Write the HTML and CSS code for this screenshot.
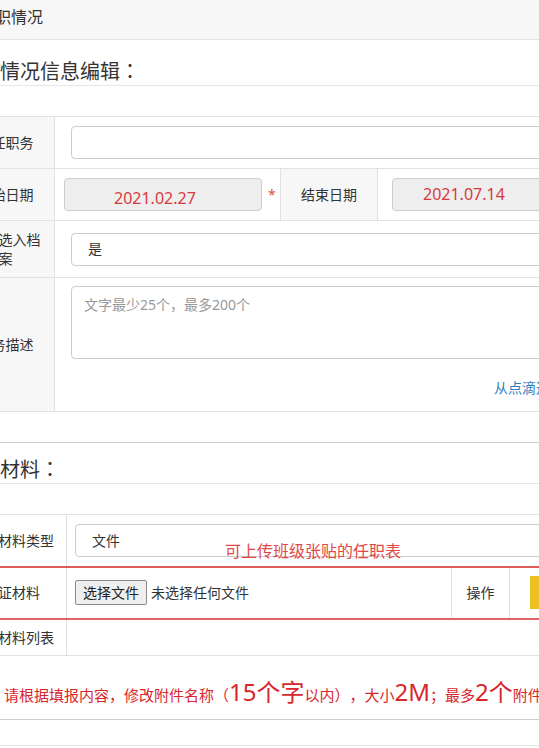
FILE: index.html
```html
<!DOCTYPE html>
<html lang="zh-CN">
<head>
<meta charset="utf-8">
<title>任职情况</title>
<link rel="stylesheet" href="styles.css">
</head>
<body>
<div class="page">
  <div class="topbar">任职情况</div>

  <div class="section">
    <div class="sec-title first">任职情况信息编辑<span class="colon" lang="zh-TW">：</span></div>
    <table class="grid grid-a">
      <colgroup><col class="a1"><col class="a2"><col class="a3"><col></colgroup>
      <tr class="ra1">
        <th>担任职务</th>
        <td colspan="3" class="in"><div class="field"></div></td>
      </tr>
      <tr class="ra2">
        <th>开始日期</th>
        <td class="date-cell"><div class="date-wrap"><div class="field date start">2021.02.27</div><span class="req">*</span></div></td>
        <th>结束日期</th>
        <td class="end-cell"><div class="field date end">2021.07.14</div></td>
      </tr>
      <tr class="ra3">
        <th>是否选入档案</th>
        <td colspan="3" class="in"><div class="field sel">是</div></td>
      </tr>
      <tr class="ra4">
        <th>任务描述</th>
        <td colspan="3" class="in top"><div class="area">文字最少25个，最多200个</div><div class="link">从点滴选择</div></td>
      </tr>
    </table>
  </div>

  <div class="section second">
    <div class="sec-title">证明材料<span class="colon" lang="zh-TW">：</span></div>
    <div class="table-wrap">
      <table class="grid grid-b">
        <colgroup><col class="b1"><col class="b2"><col class="b3"><col></colgroup>
        <tr class="rb1">
          <th>证明材料类型</th>
          <td colspan="3" class="in-b"><div class="field sel2">文件</div></td>
        </tr>
        <tr class="rb2 hl">
          <th>验证材料</th>
          <td class="in-b"><div class="file-row"><span class="filebtn">选择文件</span><span class="nofile">未选择任何文件</span></div></td>
          <th>操作</th>
          <td class="up-cell"><span class="upload">上传</span></td>
        </tr>
        <tr class="rb3">
          <th>证明材料列表</th>
          <td colspan="3"></td>
        </tr>
      </table>
      <div class="annot">可上传班级张贴的任职表</div>
    </div>
    <div class="note"><p><span class="n">注：请根据填报内容，修改附件名称（</span><span class="big">15个字</span><span class="n">以内），大小</span><span class="big">2M</span><span class="n">；最多</span><span class="big">2个</span><span class="n">附件</span></p></div>
    <div class="tail"></div>
  </div>
</div>
</body>
</html>
```

FILE: styles.css
```css
html, body {
  margin: 0;
  padding: 0;
  overflow: hidden;
  background: #fff;
}
body {
  font-family: "Noto Sans", "Noto Sans CJK SC", sans-serif;
  color: #333;
  font-size: 14px;
  line-height: 18px;
  text-spacing-trim: space-all;
}
.page {
  width: 760px;
  margin-left: -40px;
}
.topbar {
  height: 39px;
  line-height: 34px;
  font-size: 16px;
  padding-left: 19px;
  background: #f7f7f7;
  border-bottom: 1px solid #e3e3e3;
}
.sec-title {
  font-size: 20px;
  line-height: 26px;
  height: 26px;
  padding-top: 14px;
  border-bottom: 1px solid #e6e6e6;
}
.sec-title.first {
  padding-top: 19px;
}
.colon {
  font-family: "Noto Sans CJK TC", "Noto Sans CJK SC", sans-serif;
  line-height: 1;
}
.section.second {
  margin-top: 30px;
  border-top: 1px solid #cfcfcf;
}
.grid {
  border-collapse: collapse;
  table-layout: fixed;
  width: 700px;
  margin-top: 30px;
}
.grid th, .grid td {
  border: 1px solid #e1e1e1;
  padding: 0;
  vertical-align: middle;
  font-weight: normal;
  font-size: 14px;
  line-height: 19px;
}
.grid th {
  text-align: center;
  padding: 0 12px 0 8px;
}
.grid-a th {
  background: #f7f7f7;
}
.grid-a th:nth-child(3) {
  padding: 0;
}
.a1 { width: 94px; }
.a2 { width: 226px; }
.a3 { width: 97px; }
.ra1 { height: 52px; }
.ra2 { height: 52px; }
.ra3 { height: 57px; }
.ra4 { height: 134px; }
.in { padding-left: 16px !important; }
.top { vertical-align: top !important; padding-top: 8px !important; }
.field {
  box-sizing: border-box;
  height: 33px;
  border: 1px solid #cccccc;
  border-radius: 4px;
  background: #fff;
  line-height: 31px;
  font-size: 14px;
}
.sel { padding-left: 16px; line-height: 29px; }
.date-cell { padding-left: 9px !important; }
.date-wrap {
  display: flex;
  align-items: center;
  gap: 6px;
}
.date {
  width: 198px;
  background: #eeeeee;
  color: #d83a40;
  font-size: 16px;
  line-height: 31px;
}
.date.start { padding-left: 49px; padding-top: 7px; line-height: 24px; }
.end-cell { padding-left: 14px !important; }
.date.end { padding-left: 30px; }
.req {
  color: #d9534f;
  font-size: 14px;
  line-height: 14px;
}
.area {
  box-sizing: border-box;
  height: 73px;
  border: 1px solid #cccccc;
  border-radius: 4px;
  padding: 8px 12px;
  color: #999;
  font-size: 14px;
  line-height: 19px;
}
.link {
  margin-top: 21px;
  line-height: 16px;
  text-align: right;
  padding-right: 95px;
  color: #2f7fc1;
  font-size: 14px;
}
.table-wrap {
  position: relative;
}
.grid-b th {
  padding: 0 11px 0 8px;
}
.grid-b .rb2 th:nth-child(3) { padding: 0; }
.b1 { width: 106px; }
.b2 { width: 385px; }
.b3 { width: 58px; }
.rb1 { height: 52px; }
.rb2 { height: 52px; }
.rb3 { height: 37px; }
.in-b { padding-left: 8px !important; }
.sel2 { padding-left: 16px; }
.hl th, .hl td {
  border-top: 2px solid #de5b5b;
  border-bottom: 2px solid #e06464;
}
.file-row {
  display: flex;
  align-items: center;
  gap: 4px;
}
.filebtn {
  box-sizing: border-box;
  height: 25px;
  line-height: 23px;
  padding: 0 7px;
  background: #efefef;
  border: 1px solid #8a8a8a;
  border-radius: 2px;
  color: #222;
}
.nofile { color: #333; }
.up-cell { padding-left: 20px !important; }
.upload {
  display: inline-block;
  height: 33px;
  line-height: 33px;
  padding: 0 20px;
  background: #ecc11f;
  color: #fff;
  vertical-align: middle;
}
.annot {
  position: absolute;
  left: 265px;
  top: 28px;
  color: #e24848;
  font-size: 16px;
  line-height: 18px;
  white-space: nowrap;
}
.note {
  height: 63px;
  border-bottom: 1px solid #cfcfcf;
  display: flex;
  align-items: center;
  padding-left: 14px;
}
.note p {
  margin: 0;
  color: #d8262b;
  white-space: nowrap;
  line-height: 30px;
  padding-top: 12px;
}
.note .n { font-size: 15px; }
.note .big { font-size: 24px; }
.tail {
  height: 25px;
  border-bottom: 1px solid #e6e6e6;
}
```
